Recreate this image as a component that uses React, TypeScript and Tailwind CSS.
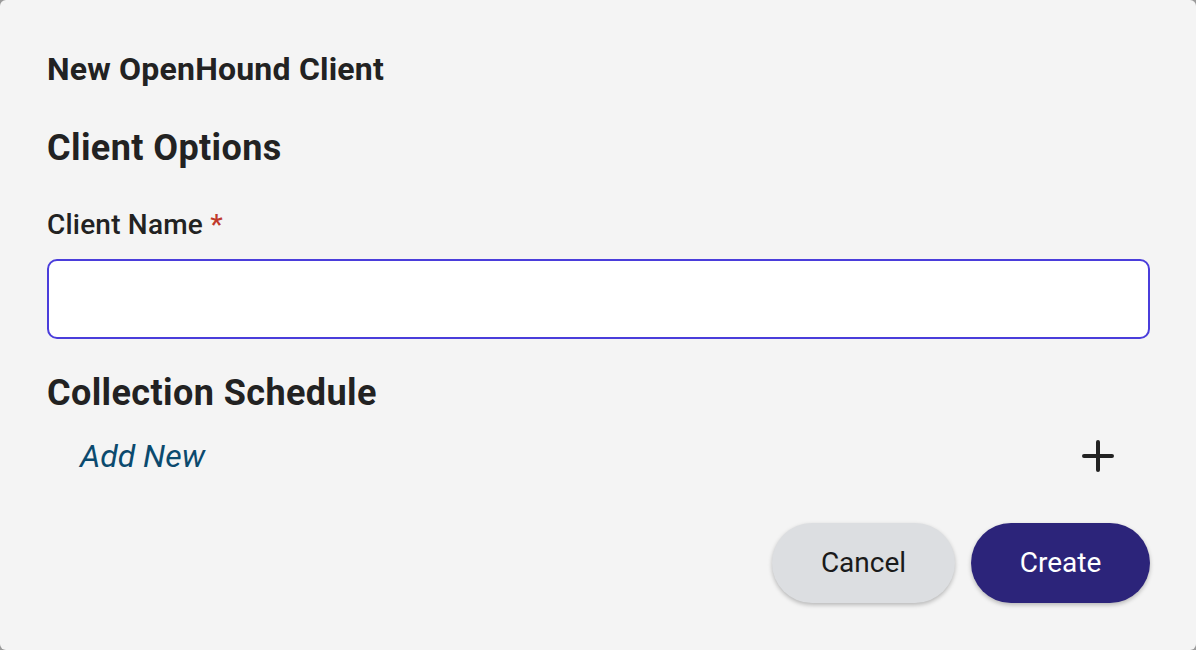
import * as React from 'react'

function PlusIcon() {
  return (
    <svg width="32" height="32" viewBox="0 0 32 32" fill="none" stroke="#222222" strokeWidth="4" strokeLinecap="round">
      <path d="M16 2v28M2 16h28" />
    </svg>
  )
}

export default function App() {
  return (
    <div className="h-[650px] w-[1196px] bg-[#9a9a9a]" style={{ fontFamily: 'Roboto, "Liberation Sans", sans-serif' }}>
      <div className="flex h-full w-full flex-col rounded-[6px] bg-[#f4f4f4] pl-[47px] pr-[46px] text-[#222222]">
        <h2 className="mt-[49px] text-[32px] font-bold leading-[40px] tracking-[0.2px]">New OpenHound Client</h2>

        <h3 className="mt-[37px] text-[36px] font-bold leading-[44px] tracking-[0.4px]">Client Options</h3>

        <label className="mt-[38px] text-[28px] font-medium leading-[34px] tracking-[0.2px]">
          Client Name <span className="text-[#c0392b]">*</span>
        </label>
        <input
          type="text"
          className="mt-[17px] h-[80px] w-full rounded-[10px] border-2 border-[#4a3ddb] bg-white px-4 text-[26px] outline-none"
        />

        <h3 className="mt-[32px] text-[36px] font-bold leading-[44px] tracking-[0.4px]">Collection Schedule</h3>

        <div className="mt-[21px] flex h-[40px] items-center justify-between pl-[33px] pr-[36px]">
          <span className="text-[32px] italic leading-[40px] text-[#0b4a6e]">Add New</span>
          <PlusIcon />
        </div>

        <div className="mt-[47px] flex justify-end gap-4">
          <button className="h-[80px] w-[183px] rounded-full bg-[#dcdee1] text-[28px] text-[#1a1a1a] shadow-[0_2px_4px_rgba(0,0,0,0.25)]">
            Cancel
          </button>
          <button className="h-[80px] w-[179px] rounded-full bg-[#2c247a] text-[28px] text-white shadow-[0_2px_4px_rgba(0,0,0,0.25)]">
            Create
          </button>
        </div>
      </div>
    </div>
  )
}
